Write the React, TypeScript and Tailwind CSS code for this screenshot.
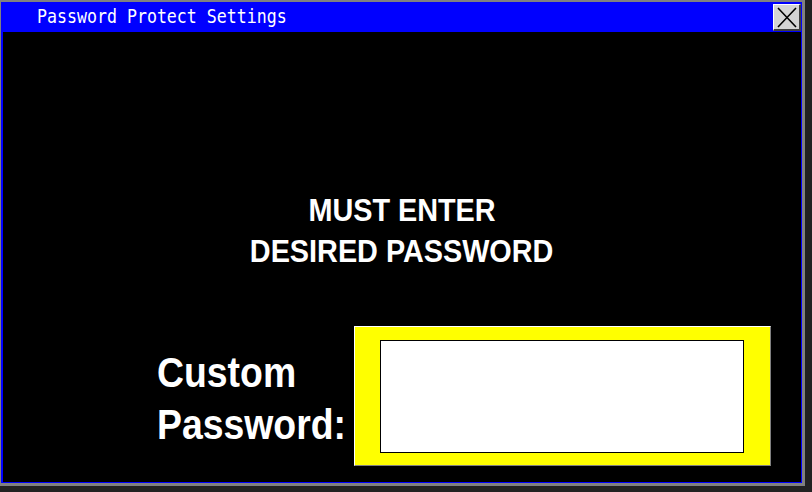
import { FC } from "react";

const CloseButton: FC = () => {
  return (
    <button className="flex items-center justify-center w-[28px] h-[27px] mt-[1px] bg-[#d4d4d4] border-t border-l border-white border-r-2 border-b-2 border-r-[#404040] border-b-[#404040]">
      <svg width="24" height="23" viewBox="0 0 24 23">
        <path d="M3 2 L21 21 M21 2 L3 21" stroke="#000" strokeWidth="1.6" fill="none" />
      </svg>
    </button>
  );
};

const App: FC = () => {
  return (
    <div className="w-[812px] h-[492px] bg-[#222222] overflow-hidden">
      <div className="w-[805px] h-[486px] flex flex-col border-[#808080] border-l border-t-2 border-r-[3px] border-b-[3px]">
        {/* title bar */}
        <div className="h-[30px] shrink-0 flex items-center justify-between bg-[#0000ff] pl-[36px] pr-[1px]">
          <span
            className="inline-block scale-y-[1.15] text-white text-[16.6px] leading-none"
            style={{ fontFamily: '"DejaVu Sans Mono", monospace' }}
          >
            Password Protect Settings
          </span>
          <CloseButton />
        </div>

        {/* body */}
        <div
          className="flex-1 flex flex-col bg-black border-[#0000ff] border-l-2 border-r border-b text-white"
          style={{ fontFamily: '"Liberation Sans", Arial, sans-serif' }}
        >
          <div className="mt-[158px] flex flex-col items-center text-[32px] leading-[41px] font-bold">
            <span className="inline-block scale-x-[0.9]">MUST ENTER</span>
            <span className="inline-block scale-x-[0.9]">DESIRED PASSWORD</span>
          </div>

          <div className="mt-[54px] flex items-center pl-[154px]">
            <div className="w-[197px] mt-[5px] shrink-0 flex flex-col items-start text-[42px] leading-[52px] font-bold">
              <span className="inline-block origin-left scale-x-[0.89] whitespace-nowrap">Custom</span>
              <span className="inline-block origin-left scale-x-[0.89] whitespace-nowrap">Password:</span>
            </div>
            <div className="w-[417px] h-[140px] shrink-0 bg-[#ffff00] border-t border-l border-white border-r border-b border-r-[#808080] border-b-[#808080] pl-[25px] pt-[13px]">
              <div className="w-[364px] h-[113px] bg-white border border-black" />
            </div>
          </div>
        </div>
      </div>
    </div>
  );
};

export default App;
